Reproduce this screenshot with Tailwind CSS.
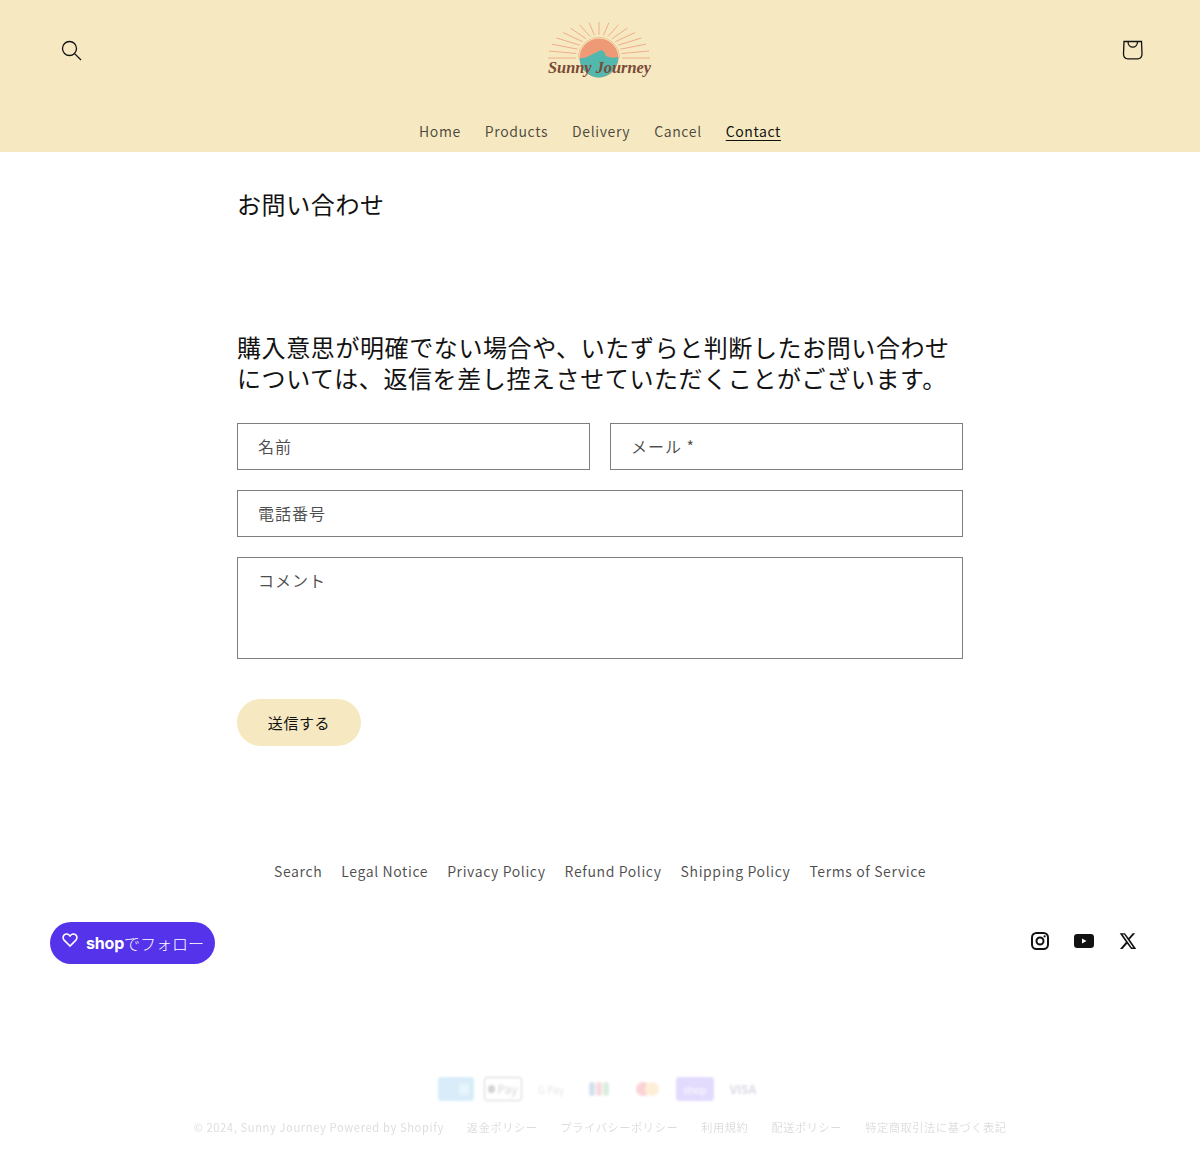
<!DOCTYPE html>
<html lang="ja">
<head>
    <meta charset="UTF-8">
    <meta name="viewport" content="width=device-width, initial-scale=1.0">
    <title>お問い合わせ</title>
    <script src="https://cdn.jsdelivr.net/npm/@tailwindcss/browser@4"></script>
</head>
<body class="bg-white text-[#121212] font-['Noto_Sans_CJK_JP','Noto_Sans',sans-serif] tracking-[0.6px]">
    <!-- Header -->
    <header class="bg-[#f6e9c1] h-[152px]">
        <div class="h-[100px] px-[46px] grid grid-cols-3 items-center">
            <a href="#" class="w-11 h-11 ml-1 flex items-center justify-center justify-self-start">
                <svg class="w-11 h-11" viewBox="50 28 44 44" fill="none" stroke="#121212" stroke-width="1.3">
                    <circle cx="69.5" cy="48.5" r="7"/>
                    <path d="M74.6 53.6 81 60"/>
                </svg>
            </a>
            <a href="#" class="block justify-self-center">
                <svg class="w-[110px] h-[60px]" viewBox="545 20 110 60" fill="none">
                    <path stroke="#eea582" stroke-width="0.9" d="M622 58H650M576 58H548M621.6 53.5 649 51M576.4 53.5 549 51M620.3 49.2 646.1 44.2M577.7 49.2 551.9 44.2M618.1 45.2 641.4 38M579.9 45.2 556.6 38M615.3 41.7 635.1 32.5M582.7 41.7 562.9 32.5M611.8 38.9 627.4 28.1M586.2 38.9 570.6 28.1M607.8 36.7 618.5 24.7M590.2 36.7 579.5 24.7M603.5 35.4 608.9 22.7M594.5 35.4 589.1 22.7M599 35V22"/>
                    <path stroke="#f0bd8e" stroke-width="0.9" d="M578.3 58A20.700 20.700 0 0 1 619.700 58"/>
                    <circle cx="599" cy="58" r="19.5" fill="#ef9a77"/>
                    <path fill="#52b8ae" d="M579.5 58C586 59 590 55 595 53 598 52 601 49 603 51 606 53 604 56 609 57 612 58 615 58 618.5 57 618 68 609 77.5 599 77.500 588 77.500 580 68 579.5 58Z"/>
                    <text x="548" y="73" textLength="103" lengthAdjust="spacingAndGlyphs" letter-spacing="0" fill="#7b4a36" font-family="Liberation Serif" font-style="italic" font-weight="700" font-size="16">Sunny Journey</text>
                </svg>
            </a>
            <a href="#" class="w-11 h-11 flex items-center justify-center justify-self-end">
                <svg class="w-11 h-11" viewBox="1110 28 44 44" fill="none" stroke="#121212" stroke-width="1.3">
                    <path d="M1124 41.5H1141.5L1142 54C1142 57 1140 58.8 1137.5 58.8H1128C1125.5 58.8 1123.5 57 1123.5 54Z"/>
                    <path d="M1128 41.5C1128 45.5 1130.5 47.2 1132.8 47.2 1135 47.2 1137.5 45.5 1137.5 41.5"/>
                </svg>
            </a>
        </div>
        <nav class="flex justify-center gap-6 text-[14px] leading-5 pt-[21px] text-[#121212]/75">
            <a href="#">Home</a>
            <a href="#">Products</a>
            <a href="#">Delivery</a>
            <a href="#">Cancel</a>
            <a href="#" class="text-[#121212] underline underline-offset-[3px] decoration-1">Contact</a>
        </nav>
    </header>

    <!-- Contact form -->
    <main class="w-[726px] mx-auto">
        <h1 class="text-[24px] leading-[32px] pt-[36px]">お問い合わせ</h1>
        <p class="text-[24px] leading-[31px] mt-[111px]">購入意思が明確でない場合や、いたずらと判断したお問い合わせについては、返信を差し控えさせていただくことがございます。</p>
        <form class="mt-[30px]">
            <div class="grid grid-cols-2 gap-5">
                <label class="h-[47px] border border-[#121212]/55 px-5 pb-[2px] flex items-center text-[16px] tracking-[1px] text-[#121212]/75">名前</label>
                <label class="h-[47px] border border-[#121212]/55 px-5 pb-[2px] flex items-center text-[16px] tracking-[1px] text-[#121212]/75">メール *</label>
            </div>
            <label class="mt-5 h-[47px] border border-[#121212]/55 px-5 pb-[2px] flex items-center text-[16px] tracking-[1px] text-[#121212]/75">電話番号</label>
            <label class="mt-5 h-[102px] border border-[#121212]/55 px-5 pt-[10px] block text-[16px] tracking-[1px] leading-6 text-[#121212]/75">コメント</label>
            <button type="button" class="mt-10 w-[124px] h-[47px] pt-[2px] rounded-full bg-[#f6e9c1] text-[15px] text-[#121212] block">送信する</button>
        </form>
    </main>

    <!-- Footer -->
    <footer>
        <div class="flex justify-center gap-[19px] mt-[115px] text-[14px] leading-5 text-[#121212]/75">
            <a href="#">Search</a>
            <a href="#">Legal Notice</a>
            <a href="#">Privacy Policy</a>
            <a href="#">Refund Policy</a>
            <a href="#">Shipping Policy</a>
            <a href="#">Terms of Service</a>
        </div>

        <div class="flex justify-between items-start px-[50px] mt-[41px]">
            <a href="#" class="w-[165px] h-[42px] rounded-full bg-[#5433eb] text-white flex items-center pl-3 tracking-normal">
                <svg class="w-4 h-4 -mt-1.5 shrink-0" viewBox="0 0 24 24" fill="none" stroke="white" stroke-width="2.4"><path d="M12 21 3.5 12.5C1 10 1 6.3 3.4 4.2 5.8 2.2 9.4 2.6 12 6c2.6-3.4 6.2-3.8 8.6-1.8C23 6.3 23 10 20.500 12.500Z"/></svg>
                <span class="ml-2 text-[16px] font-bold font-['Inter',sans-serif] -tracking-[0.2px]">shop</span><span class="text-[16px] font-light">でフォロー</span>
            </a>
            <div class="flex -mt-[3px]">
                <a href="#" class="w-11 h-11 flex items-center justify-center">
                    <svg class="w-[18px] h-[18px]" viewBox="0 0 18 18" fill="none" stroke="#121212"><rect x="1" y="1" width="16" height="16" rx="4.500" stroke-width="2"/><circle cx="9" cy="9" r="3.500" stroke-width="2"/><circle cx="13.600" cy="4.400" r="1.100" fill="#121212" stroke="none"/></svg>
                </a>
                <a href="#" class="w-11 h-11 flex items-center justify-center">
                    <svg class="w-5 h-[14px]" viewBox="0 0 20 14"><path fill="#121212" fill-rule="evenodd" d="M3 0H17C18.700 0 20 1.300 20 3V11C20 12.700 18.700 14 17 14H3C1.300 14 0 12.700 0 11V3C0 1.300 1.300 0 3 0ZM8 4.500V9.500L12.500 7Z"/></svg>
                </a>
                <a href="#" class="w-11 h-11 flex items-center justify-center">
                    <svg class="w-[18px] h-[18px]" viewBox="0 0 24 24"><path fill="#121212" d="M18.200 1.500h3.400l-7.400 8.500L23 22.500h-6.800l-5.400-7-6.100 7H1.300l7.900-9.100L.900 1.500h7l4.900 6.400zm-1.200 19h1.900L6.900 3.400h-2z"/></svg>
                </a>
            </div>
        </div>

        <!-- Payment icons, washed out in the reference -->
        <div class="flex justify-center gap-[10px] mt-[113px] opacity-[0.17] blur-[1px]">
            <span class="w-[36px] h-6 rounded-[3px] bg-[#1f9ade] flex items-center justify-end pr-1 text-white text-[11px]">▦</span>
            <span class="w-[38px] h-6 rounded-[3px] border border-black flex items-center justify-center gap-[2px] text-[12px] tracking-normal text-black">
                <i class="w-[7px] h-[8px] rounded-sm bg-black"></i>Pay
            </span>
            <span class="w-[38px] h-6 flex items-center justify-center text-[10px] tracking-normal text-[#5f6368]">G Pay</span>
            <span class="w-[38px] h-6 flex items-center justify-center gap-px">
                <i class="w-[6px] h-[14px] rounded-sm bg-[#0b4ea2]"></i><i class="w-[6px] h-[14px] rounded-sm bg-[#d22d3c]"></i><i class="w-[6px] h-[14px] rounded-sm bg-[#2a9d4a]"></i>
            </span>
            <span class="w-[38px] h-6 flex items-center justify-center">
                <i class="w-[14px] h-[14px] rounded-full bg-[#eb001b]"></i><i class="w-[14px] h-[14px] rounded-full bg-[#f79e1b] -ml-[5px]"></i>
            </span>
            <span class="w-[38px] h-6 rounded-[3px] bg-[#5a31f4] text-white flex items-center justify-center text-[10px] tracking-normal">shop</span>
            <span class="w-[38px] h-6 flex items-center justify-center text-[12px] font-bold tracking-normal text-[#1a1f71]">VISA</span>
        </div>

        <div class="flex justify-center gap-[23px] mt-[18px] text-[11.2px] leading-4 text-[#121212]/15 blur-[0.7px]">
            <span>© 2024, Sunny Journey Powered by Shopify</span>
            <span>返金ポリシー</span>
            <span>プライバシーポリシー</span>
            <span>利用規約</span>
            <span>配送ポリシー</span>
            <span>特定商取引法に基づく表記</span>
        </div>
    </footer>
</body>
</html>
